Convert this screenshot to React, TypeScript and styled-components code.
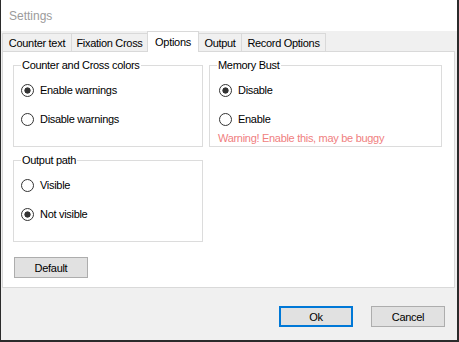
import React, { useState } from 'react';
import styled, { createGlobalStyle } from 'styled-components';

const GlobalStyle = createGlobalStyle`
  html, body {
    margin: 0;
    padding: 0;
    background: #2b2b2b;
  }
  body {
    font-family: "Liberation Sans", Arial, sans-serif;
    font-size: 11px;
    color: #000;
  }
  * {
    box-sizing: border-box;
  }
`;

const tabs = [
  { label: 'Counter text', w: 70 },
  { label: 'Fixation Cross', w: 77 },
  { label: 'Options', w: 52 },
  { label: 'Output', w: 44 },
  { label: 'Record Options', w: 85 },
];

const App = () => {
  const [tab, setTab] = useState(2);
  const [warnings, setWarnings] = useState('enable');
  const [bust, setBust] = useState('disable');
  const [path, setPath] = useState('hidden');

  return (
    <>
      <GlobalStyle />
      <Window>
        <TitleBar>Settings</TitleBar>
        <Body>
          <TabStrip>
            {tabs.map((t, i) => (
              <Tab key={t.label} $w={t.w} $active={i === tab} onClick={() => setTab(i)}>
                {t.label}
              </Tab>
            ))}
          </TabStrip>
          <Panel>
            <Row>
              <GroupBox $w={190}>
                <Legend>Counter and Cross colors</Legend>
                <GroupBody $pad={7}>
                  <Radio label='Enable warnings' checked={warnings === 'enable'} onChange={() => setWarnings('enable')} />
                  <Radio label='Disable warnings' checked={warnings === 'disable'} onChange={() => setWarnings('disable')} />
                </GroupBody>
              </GroupBox>
              <GroupBox $w={233}>
                <Legend>Memory Bust</Legend>
                <GroupBody $pad={9}>
                  <Radio label='Disable' checked={bust === 'disable'} onChange={() => setBust('disable')} />
                  <Radio label='Enable' checked={bust === 'enable'} onChange={() => setBust('enable')} />
                </GroupBody>
                <Warning>Warning! Enable this, may be buggy</Warning>
              </GroupBox>
            </Row>
            <Row>
              <GroupBox $w={190}>
                <Legend>Output path</Legend>
                <GroupBody $pad={7}>
                  <Radio label='Visible' checked={path === 'visible'} onChange={() => setPath('visible')} />
                  <Radio label='Not visible' checked={path === 'hidden'} onChange={() => setPath('hidden')} />
                </GroupBody>
              </GroupBox>
            </Row>
            <DefaultButton>Default</DefaultButton>
          </Panel>
        </Body>
        <Footer>
          <Button $primary>Ok</Button>
          <Button>Cancel</Button>
        </Footer>
      </Window>
    </>
  );
};

type RadioProps = {
  label: string;
  checked: boolean;
  onChange: () => void;
};

const Radio = ({ label, checked, onChange }: RadioProps) => (
  <RadioLabel>
    <RadioInput type='radio' checked={checked} onChange={onChange} />
    {label}
  </RadioLabel>
);

const Window = styled.div`
  width: 456px;
  height: 340px;
  margin: 0 2px 0 1px;
  background: #f0f0f0;
  display: flex;
  flex-direction: column;
`;

const TitleBar = styled.div`
  flex: none;
  height: 31px;
  background: #fff;
  padding-left: 8px;
  display: flex;
  align-items: center;
  font-size: 12px;
  color: #9b9b9b;
`;

const Body = styled.div`
  flex: none;
  display: flex;
  flex-direction: column;
  padding: 0 2px 0 1px;
`;

const TabStrip = styled.div`
  height: 20px;
  display: flex;
  align-items: flex-end;
`;

const Tab = styled.div<{ $w: number; $active?: boolean }>`
  position: relative;
  z-index: ${p => (p.$active ? 2 : 1)};
  flex: none;
  width: ${p => p.$w}px;
  height: ${p => (p.$active ? 21 : 18)}px;
  margin-right: -1px;
  margin-bottom: ${p => (p.$active ? -1 : 0)}px;
  padding-bottom: ${p => (p.$active ? 1 : 0)}px;
  border: 1px solid #d9d9d9;
  border-bottom: none;
  background: ${p => (p.$active ? '#fff' : '#f0f0f0')};
  display: flex;
  align-items: center;
  justify-content: center;
  letter-spacing: -0.3px;
  white-space: nowrap;
  cursor: default;
`;

const Panel = styled.div`
  height: 237px;
  border: 1px solid #d9d9d9;
  background: #fff;
  padding: 7px 10px 0;
  display: flex;
  flex-direction: column;
  align-items: flex-start;
  gap: 7px;
`;

const Row = styled.div`
  display: flex;
  gap: 6px;
`;

const GroupBox = styled.fieldset<{ $w: number }>`
  width: ${p => p.$w}px;
  height: 88px;
  margin: 0;
  padding: 0;
  min-inline-size: 0;
  border: 1px solid #dcdcdc;
  display: flex;
  flex-direction: column;
`;

const Legend = styled.legend`
  margin-left: 7px;
  padding: 0 1px;
  line-height: 13px;
  font-size: 11px;
  letter-spacing: -0.3px;
`;

const GroupBody = styled.div<{ $pad: number }>`
  display: flex;
  flex-direction: column;
  gap: 16px;
  padding: 12px 0 0 ${p => p.$pad}px;
`;

const RadioLabel = styled.label`
  display: flex;
  align-items: center;
  gap: 6px;
  height: 13px;
  line-height: 13px;
  letter-spacing: -0.3px;
  white-space: nowrap;
`;

const RadioInput = styled.input`
  appearance: none;
  flex: none;
  width: 13px;
  height: 13px;
  margin: 0;
  border: 1px solid #333;
  border-radius: 50%;
  background: #fff;

  &:checked {
    background: radial-gradient(circle at center, #333 0 2.8px, #fff 3.4px);
  }
`;

const Warning = styled.div`
  margin: 6px 0 0 8px;
  line-height: 13px;
  color: #f08080;
  letter-spacing: -0.3px;
  white-space: nowrap;
`;

const Button = styled.button<{ $primary?: boolean }>`
  width: 74px;
  height: 21px;
  padding: 0;
  background: #e1e1e1;
  border: ${p => (p.$primary ? '2px solid #0078d7' : '1px solid #adadad')};
  font-family: "Liberation Sans", Arial, sans-serif;
  font-size: 11px;
  letter-spacing: -0.3px;
  color: #000;
`;

const DefaultButton = styled(Button)`
  margin: 8px 0 0 1px;
`;

const Footer = styled.div`
  flex: 1;
  display: flex;
  justify-content: flex-end;
  align-items: flex-start;
  gap: 18px;
  padding: 18px 12px 0 0;
`;

export default App;
